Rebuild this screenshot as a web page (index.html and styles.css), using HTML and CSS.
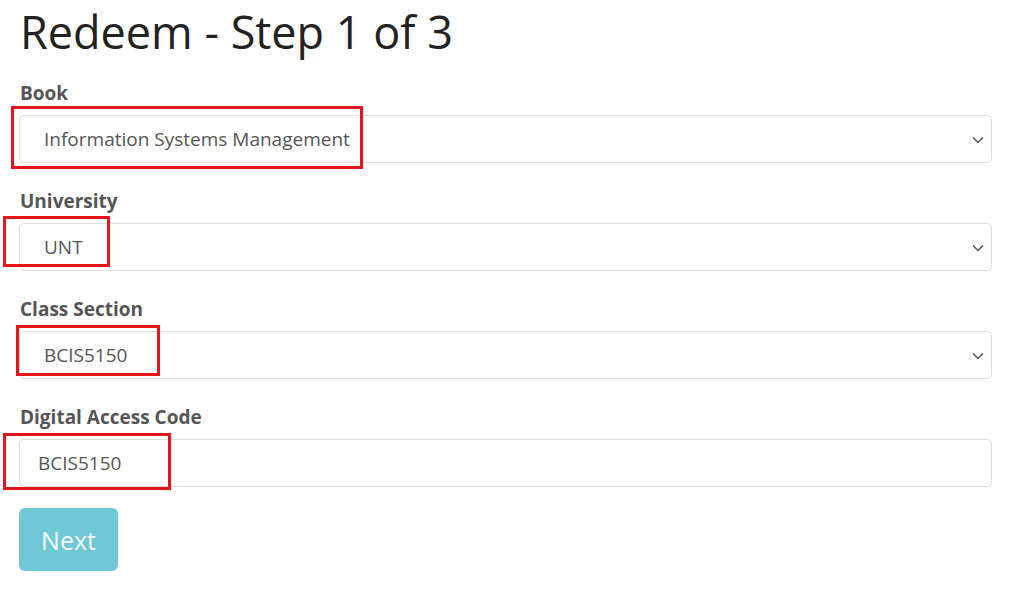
FILE: index.html
```html
<!DOCTYPE html>
<html>
  <head>
    <meta charset="utf-8" />
    <meta name="viewport" content="width=device-width, initial-scale=1" />
    <title>Redeem</title>
    <link rel="stylesheet" href="styles.css">
  </head>

  <body>
    <div class="page">
      <h1 class="title">Redeem - Step 1 of 3</h1>

      <div class="form-group">
        <label for="book">Book</label>
        <div class="select-wrap">
          <select id="book" class="form-control">
            <option>Information Systems Management</option>
          </select>
          <svg class="chevron" width="12" height="8" viewBox="0 0 12 8"><path d="M1 1.5l5 5 5-5" fill="none" stroke="#555" stroke-width="1.5"/></svg>
        </div>
      </div>

      <div class="form-group">
        <label for="univ">University</label>
        <div class="select-wrap">
          <select id="univ" class="form-control">
            <option>UNT</option>
          </select>
          <svg class="chevron" width="12" height="8" viewBox="0 0 12 8"><path d="M1 1.5l5 5 5-5" fill="none" stroke="#555" stroke-width="1.5"/></svg>
        </div>
      </div>

      <div class="form-group">
        <label for="section">Class Section</label>
        <div class="select-wrap">
          <select id="section" class="form-control">
            <option>BCIS5150</option>
          </select>
          <svg class="chevron" width="12" height="8" viewBox="0 0 12 8"><path d="M1 1.5l5 5 5-5" fill="none" stroke="#555" stroke-width="1.5"/></svg>
        </div>
      </div>

      <div class="form-group last">
        <label for="code">Digital Access Code</label>
        <input id="code" class="form-control code" type="text" value="BCIS5150" autocomplete="off" />
      </div>

      <button class="btn-next" disabled>Next</button>
    </div>

    <!-- annotation boxes drawn over the screenshot -->
    <div class="mark mark-book"></div>
    <div class="mark mark-univ"></div>
    <div class="mark mark-section"></div>
    <div class="mark mark-code"></div>
  </body>
</html>
```

FILE: styles.css
```css
html,
body {
  margin: 0;
  background: #fff;
}
body {
  font-family: "Open Sans", "Noto Sans", "Liberation Sans", sans-serif;
  color: #555;
}
.page {
  padding: 3px 32px 0 19px;
}
.title {
  margin: 0 0 19px 1px;
  font-size: 45px;
  font-weight: 500;
  line-height: 58px;
  color: #222;
}
.form-group {
  margin-bottom: 25px;
}
.form-group.last {
  margin-bottom: 21px;
}
label {
  display: block;
  font-size: 19px;
  font-weight: 700;
  line-height: 26px;
  margin: 0 0 9px 1px;
  color: #555;
}
.select-wrap {
  position: relative;
}
.form-control {
  display: block;
  width: 100%;
  height: 48px;
  box-sizing: border-box;
  border: 1px solid #ddd;
  border-radius: 5px;
  background: #fff;
  font-family: inherit;
  font-size: 19px;
  color: #555;
  margin: 0;
  outline: none;
}
select.form-control {
  -webkit-appearance: none;
  appearance: none;
  padding: 0 40px 0 24px;
}
.code {
  padding: 0 18px;
}
.chevron {
  position: absolute;
  right: 8px;
  top: 21px;
}
.btn-next {
  display: block;
  margin: 0;
  width: 99px;
  height: 63px;
  border: none;
  border-radius: 6px;
  background-color: #6fc8d6;
  color: #f4fbfc;
  font-family: inherit;
  font-size: 25px;
  padding: 0;
}
.mark {
  position: absolute;
  border: 3px solid #e8141c;
  box-sizing: border-box;
}
.mark-book {
  left: 11px;
  top: 106px;
  width: 352px;
  height: 63px;
}
.mark-univ {
  left: 3px;
  top: 216px;
  width: 107px;
  height: 51px;
}
.mark-section {
  left: 16px;
  top: 325px;
  width: 144px;
  height: 51px;
}
.mark-code {
  left: 3px;
  top: 433px;
  width: 168px;
  height: 57px;
}
```
